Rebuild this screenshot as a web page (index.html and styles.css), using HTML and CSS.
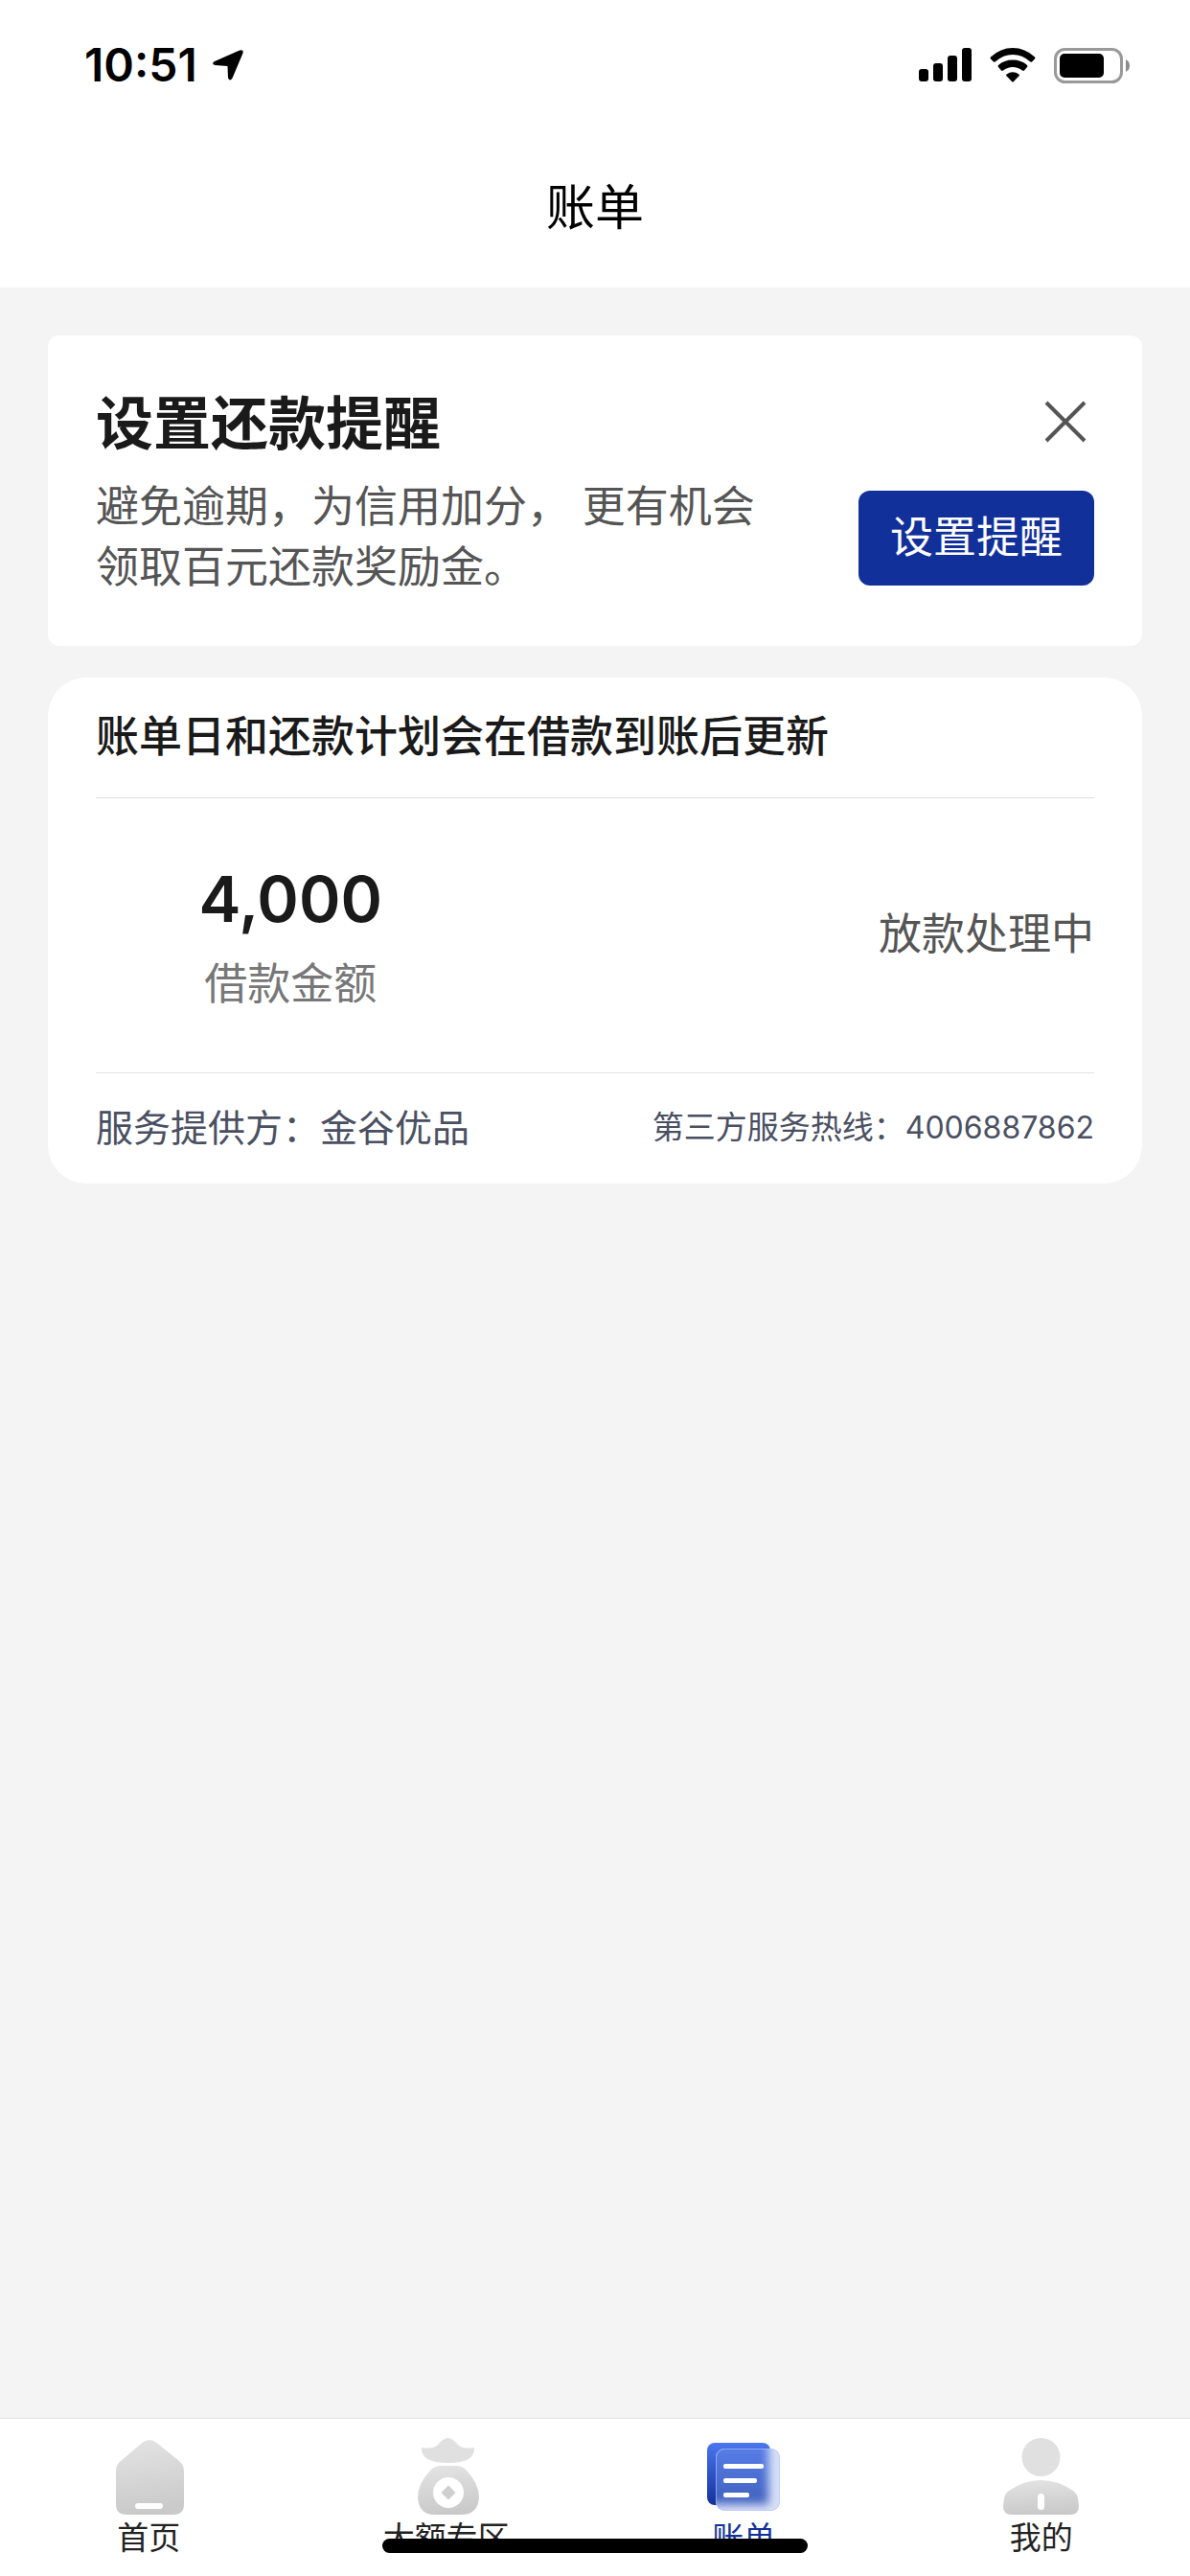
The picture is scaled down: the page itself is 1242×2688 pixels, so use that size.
FILE: index.html
```
<!DOCTYPE html>
<html lang="zh-CN">
  <head>
    <meta charset="UTF-8" />
    <meta name="viewport" content="width=device-width, initial-scale=1.0" />
    <title>账单</title>
    <link rel="stylesheet" href="styles.css">
  </head>

  <body>
    <div class="status-bar">
      <div class="status-left">
        <span class="time">10:51</span>
        <svg viewBox="0 0 32 32" width="32" height="32">
          <path d="M2 12 L27.500 0.700 Q33 -1 31.300 4 L20.500 29.500 Q18 33.500 16 29.500 L15.500 17 L2.500 16 Q-2 14.500 2 12 Z" />
        </svg>
      </div>
      <div class="status-right">
        <svg viewBox="0 0 55 36" width="55" height="36">
          <rect x="0" y="22" width="10" height="13" rx="3" />
          <rect x="15" y="16" width="10" height="19" rx="3" />
          <rect x="30" y="8" width="10" height="27" rx="3" />
          <rect x="45" y="0" width="10" height="35" rx="3" />
        </svg>
        <svg viewBox="0 0 48 36" width="48" height="36">
          <path d="M1 9.500 Q11 0 24 0 Q37 0 47 9.500 Q48 10.500 47 11.500 L44 14.500 Q43 15 42 14.300 Q34 7 24 7 Q14 7 6 14.300 Q5 15 4 14.500 L1 11.500 Q0 10.500 1 9.500 Z" />
          <path d="M9 18 Q15 12.500 24 12.500 Q33 12.500 39 18 Q40 19 39 20 L36 23.500 Q35 24.300 34 23.500 Q29.500 20 24 20 Q18.500 20 14 23.500 Q13 24.300 12 23.500 L9 20 Q8 19 9 18 Z" />
          <path d="M17.500 27.500 Q24 23 30.500 27.500 Q31.300 28.300 30.500 29.200 L25 35 Q24 36 23 35 L17.500 29.200 Q16.700 28.300 17.500 27.500 Z" />
        </svg>
        <svg viewBox="0 0 80 37" width="80" height="37">
          <rect x="1.500" y="1.500" width="69" height="34" rx="10" fill="none" stroke="#999" stroke-width="3" />
          <rect x="6" y="6" width="46" height="25" rx="5" />
          <path d="M75 12 Q79 14 79 18.500 Q79 23 75 25 Z" fill="#8c8c8c" />
        </svg>
      </div>
    </div>

    <header>账单</header>

    <main>
      <section class="card remind">
        <div class="remind-text">
          <h2>设置还款提醒</h2>
          <p>避免逾期，为信用加分， 更有机会<br />领取百元还款奖励金。</p>
        </div>
        <div class="remind-action">
          <button class="close" aria-label="关闭">
            <svg viewBox="0 0 44 44" width="44" height="44">
              <path d="M2 2 L42 42 M42 2 L2 42" />
            </svg>
          </button>
          <button class="btn">设置提醒</button>
        </div>
      </section>

      <section class="card bill">
        <h3>账单日和还款计划会在借款到账后更新</h3>
        <div class="bill-body">
          <div class="amount">
            <strong>4,000</strong>
            <span>借款金额</span>
          </div>
          <div class="state">放款处理中</div>
        </div>
        <div class="bill-foot">
          <span class="provider">服务提供方：金谷优品</span>
          <span class="hotline">第三方服务热线：<span class="num">4006887862</span></span>
        </div>
      </section>
    </main>

    <nav>
      <a href="#home">
        <svg viewBox="0 0 81 81" width="81" height="81">
          <defs>
            <linearGradient id="gray" x1="0" y1="0" x2="0.15" y2="1">
              <stop offset="0" stop-color="#e4e4e4" />
              <stop offset="1" stop-color="#cacaca" />
            </linearGradient>
          </defs>
          <path d="M34 4.500 Q41 -0.500 48 4.500 L72 24 Q77 28 77 35 L77 69 Q77 80 66 80 L17 80 Q6 80 6 69 L6 35 Q6 28 11 24 Z" fill="url(#gray)" />
          <rect x="26" y="68" width="29" height="6" rx="3" fill="#fff" />
        </svg>
        <span>首页</span>
      </a>
      <a href="#large">
        <svg viewBox="0 0 81 81" width="81" height="81">
          <path d="M15 10 Q27 12 32 7 Q38 0 42.500 0 Q47 0 53 7 Q58 12 70 10 Q71 26 43 26 Q14 26 15 10 Z" fill="#e0e0e0" />
          <path d="M35 29 L51 29 Q57 29 61 33 Q75 47 75 62 Q74 80 56 80 L29 80 Q12 80 11 62 Q11 47 25 33 Q29 29 35 29 Z" fill="url(#gray)" />
          <circle cx="43" cy="57" r="16" fill="#fff" />
          <path d="M43 49.500 L50.500 57 L43 64.500 L35.500 57 Z" fill="#cfcfcf" />
        </svg>
        <span>大额专区</span>
      </a>
      <a href="#bill" class="active">
        <svg viewBox="0 0 81 81" width="81" height="81">
          <defs>
            <linearGradient id="blue" x1="0" y1="0" x2="0" y2="1">
              <stop offset="0" stop-color="#4a76f0" />
              <stop offset="1" stop-color="#15309b" />
            </linearGradient>
            <linearGradient id="glass" x1="0" y1="0" x2="0" y2="1">
              <stop offset="0" stop-color="#4a76f0" />
              <stop offset="1" stop-color="#2c50b8" />
            </linearGradient>
            <filter id="soft" x="-30%" y="-30%" width="160%" height="160%">
              <feGaussianBlur stdDeviation="5" />
            </filter>
            <clipPath id="sheet">
              <rect x="11" y="11" width="67" height="65" rx="9" />
            </clipPath>
          </defs>
          <rect x="2" y="5" width="66" height="65" rx="8" fill="url(#blue)" />
          <g clip-path="url(#sheet)">
            <rect x="11" y="11" width="67" height="65" fill="#d3dcf6" />
            <rect x="-10" y="-5" width="76" height="74" fill="url(#glass)" filter="url(#soft)" />
            <rect x="11" y="11" width="67" height="65" fill="#fff" opacity="0.1" />
          </g>
          <rect x="11.500" y="11.500" width="66" height="64" rx="9" fill="none" stroke="#b4c6fa" stroke-opacity="0.6" />
          <g fill="#fff">
            <rect x="19" y="27" width="42" height="5" rx="2" />
            <rect x="19" y="42" width="35" height="5" rx="2" />
            <rect x="19" y="57" width="27" height="5" rx="2" />
          </g>
        </svg>
        <span>账单</span>
      </a>
      <a href="#mine">
        <svg viewBox="0 0 81 81" width="81" height="81">
          <circle cx="40.500" cy="20" r="20" fill="#e0e0e0" />
          <path d="M40.500 44 Q58 44 74 55 Q78 58 79 63 L80 71 Q80 80 71 80 L10 80 Q1 80 1 71 L2 63 Q3 58 7 55 Q23 44 40.500 44 Z" fill="url(#gray)" />
          <rect x="37" y="58" width="7" height="17" rx="3.500" fill="#fff" />
        </svg>
        <span>我的</span>
      </a>
    </nav>

    <div class="home-indicator"></div>
  </body>
</html>
```
FILE: styles.css
```
* {
  box-sizing: border-box;
}

body {
  margin: 0;
  min-height: 100vh;
  display: flex;
  flex-direction: column;
  font-family: Inter, "Noto Sans CJK SC", sans-serif;
  background-color: #f4f4f4;
  color: #1a1a1a;
}

svg {
  display: block;
}

h2,
h3,
p {
  margin: 0;
}

button {
  border: none;
  padding: 0;
  font-family: inherit;
  cursor: pointer;
}

.status-bar {
  display: flex;
  justify-content: space-between;
  align-items: center;
  height: 132px;
  padding: 4px 62px 0 88px;
  background-color: #fff;
  color: #000;
}

.status-left,
.status-right {
  display: flex;
  align-items: center;
}

.status-left {
  gap: 16px;
}

.status-right {
  gap: 19px;
}

.time {
  font-size: 48px;
  font-weight: 600;
  line-height: 60px;
}

header {
  background-color: #fff;
  color: #000;
  font-size: 51px;
  line-height: 60px;
  padding: 55px 0 53px;
  text-align: center;
}

main {
  flex: 1;
  display: flex;
  flex-direction: column;
  gap: 33px;
  padding: 50px;
}

.card {
  background-color: #fff;
}

.remind {
  display: flex;
  justify-content: space-between;
  padding: 62px 50px 51px;
  border-radius: 12px;
}

.remind h2 {
  font-size: 60px;
  font-weight: 600;
  line-height: 60px;
  margin-bottom: 25px;
}

.remind p {
  font-size: 45px;
  line-height: 63px;
  color: #555;
}

.remind-action {
  display: flex;
  flex-direction: column;
  align-items: flex-end;
  gap: 50px;
  padding-top: 6px;
}

.close {
  margin-right: 8px;
  background: none;
}

.close path {
  stroke: #555;
  stroke-width: 4;
  fill: none;
}

.btn {
  height: 99px;
  padding: 0 33px 8px;
  border-radius: 12px;
  background-color: #12309a;
  color: #fff;
  font-size: 45px;
}

.bill {
  padding: 0 50px;
  border-radius: 40px;
}

.bill h3 {
  padding: 37px 0 38px;
  border-bottom: 1px solid #e2e2e2;
  font-size: 45px;
  font-weight: 500;
  line-height: 50px;
}

.bill-body {
  display: flex;
  justify-content: space-between;
  align-items: center;
  padding: 69px 0 62px;
  border-bottom: 1px solid #e2e2e2;
}

.amount {
  flex: 0 0 39%;
  display: flex;
  flex-direction: column;
  align-items: center;
  gap: 23px;
}

.amount strong {
  font-size: 66px;
  font-weight: 600;
  line-height: 72px;
}

.amount span {
  font-size: 45px;
  line-height: 60px;
  color: #777;
}

.state {
  font-size: 45px;
  line-height: 60px;
  padding-bottom: 10px;
  color: #555;
}

.bill-foot {
  display: flex;
  justify-content: space-between;
  align-items: center;
  height: 115px;
  padding-bottom: 2px;
  color: #4a5062;
  line-height: 60px;
}

.provider {
  font-size: 39px;
}

.hotline {
  font-size: 33px;
}

.hotline .num {
  font-size: 32px;
}

nav {
  display: grid;
  grid-template-columns: repeat(4, 1fr);
  height: 165px;
  padding-top: 20px;
  border-top: 1px solid #e2e2e2;
  background-color: #fff;
}

nav a {
  display: flex;
  flex-direction: column;
  align-items: center;
  color: #222;
  font-size: 33px;
  line-height: 46px;
  text-decoration: none;
}

nav .active {
  color: #12309a;
}

.home-indicator {
  position: fixed;
  left: 50%;
  bottom: 24px;
  width: 444px;
  height: 15px;
  margin-left: -222px;
  border-radius: 8px;
  background-color: #000;
}
```
